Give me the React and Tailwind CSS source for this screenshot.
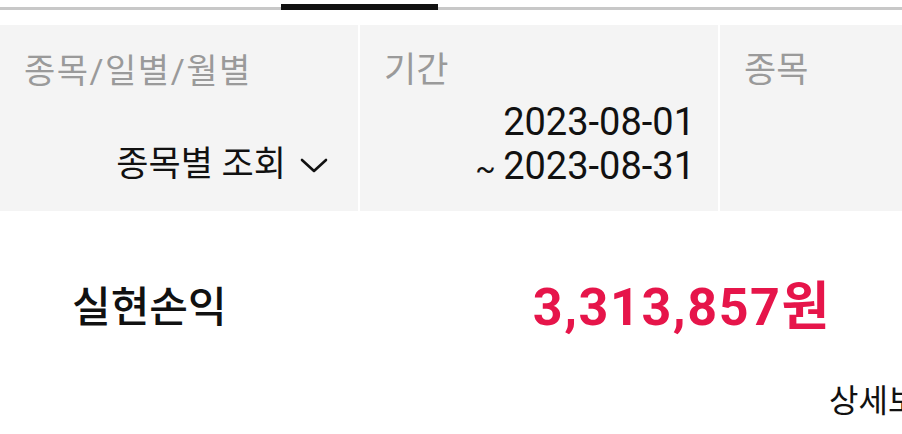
export default function App() {
  const font = { fontFamily: 'Roboto, "Noto Sans CJK KR", sans-serif' };
  return (
    <div className="w-[902px] h-[434px] overflow-hidden bg-white text-[#111]" style={font}>
      {/* tab indicator */}
      <div className="relative h-[10px]">
        <div className="absolute left-0 right-0 top-[7px] h-[3px] bg-[#c8c8c8]" />
        <div className="absolute left-[281px] top-[4px] h-[6px] w-[157px] bg-[#111]" />
      </div>
      {/* filter panels */}
      <div className="mt-[15px] flex h-[186px] gap-[2px] overflow-hidden">
        <div className="flex w-[358px] shrink-0 flex-col bg-[#f4f4f4] pl-[24px] pr-[30px] pt-[26px] pb-[24px]">
          <div className="text-[34px] leading-[40px] text-[#9a9a9a] tracking-[1.5px]">종목/일별/월별</div>
          <div className="mt-auto flex items-center justify-end gap-[14px] text-[35px] leading-[44px]">
            <span>종목별 조회</span>
            <svg width="28" height="16" viewBox="0 0 28 16" fill="none" className="mt-[2px]">
              <path d="M2 2 L14 13 L26 2" stroke="#111" strokeWidth="2.6" strokeLinecap="round" strokeLinejoin="round" />
            </svg>
          </div>
        </div>
        <div className="flex w-[358px] shrink-0 flex-col bg-[#f4f4f4] pl-[24px] pr-[23px] pt-[26px] pb-[20px]">
          <div className="text-[35px] leading-[40px] text-[#9a9a9a]">기간</div>
          <div className="mt-auto text-right text-[38px] leading-[44px]">
            <div>2023-08-01</div>
            <div><span className="text-[30px]">~ </span>2023-08-31</div>
          </div>
        </div>
        <div className="flex w-[358px] shrink-0 flex-col bg-[#f4f4f4] pl-[24px] pt-[26px]">
          <div className="text-[35px] leading-[40px] text-[#9a9a9a]">종목</div>
        </div>
      </div>
      {/* result */}
      <div className="flex items-center justify-between pl-[72px] pr-[71px] pt-[62px]">
        <div className="text-[42px] font-medium leading-[70px]">실현손익</div>
        <div className="text-[52px] font-bold leading-[70px] text-[#e6154a] tracking-[1.6px]">3,313,857원</div>
      </div>
      <div className="mt-[38px] whitespace-nowrap pl-[829px] text-[32px] leading-[40px]">상세보기 &gt;</div>
    </div>
  );
}
